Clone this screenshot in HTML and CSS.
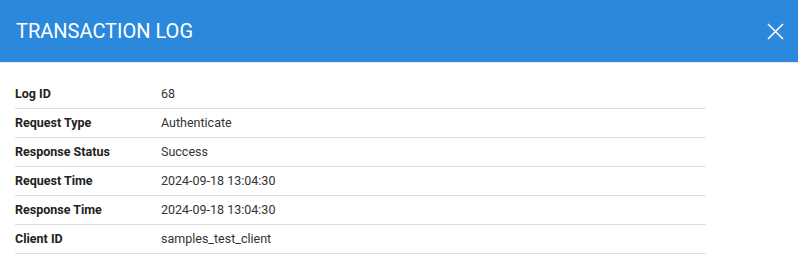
FILE: index.html
```html
<!DOCTYPE html>
<html>
<head>
<meta charset="utf-8">
<link rel="stylesheet" href="styles.css">
</head>
<body>
<div class="dialog">
  <header class="dialog-header">
    <h1 class="dialog-title">TRANSACTION LOG</h1>
    <button class="close-btn" aria-label="Close">
      <svg width="17" height="17" viewBox="0 0 17 17"><path d="M1 1 L16 16 M16 1 L1 16" stroke="#fff" stroke-width="1.6" fill="none"/></svg>
    </button>
  </header>
  <div class="dialog-body">
    <table class="log-table">
      <tr><th>Log ID</th><td>68</td></tr>
      <tr><th>Request Type</th><td>Authenticate</td></tr>
      <tr><th>Response Status</th><td>Success</td></tr>
      <tr><th>Request Time</th><td>2024-09-18 13:04:30</td></tr>
      <tr><th>Response Time</th><td>2024-09-18 13:04:30</td></tr>
      <tr><th>Client ID</th><td>samples_test_client</td></tr>
    </table>
  </div>
</div>
</body>
</html>
```
FILE: styles.css
```css
html, body {
  margin: 0;
  padding: 0;
  background: #fff;
  font-family: Roboto, "Liberation Sans", sans-serif;
}
.dialog {
  width: 798px;
}
.dialog-header {
  height: 62px;
  background: #2a88dd;
  border-bottom: 1px solid #e8e8e8;
  display: flex;
  align-items: center;
  justify-content: space-between;
  padding: 0 14px 0 16px;
  box-sizing: content-box;
}
.dialog-title {
  margin: 0;
  color: #fff;
  font-size: 20px;
  font-weight: 400;
  letter-spacing: 0;
}
.close-btn {
  background: none;
  border: 0;
  padding: 0;
  width: 17px;
  height: 17px;
  display: flex;
  cursor: pointer;
}
.dialog-body {
  padding: 17px 15px 16px;
}
.log-table {
  width: 691px;
  border-collapse: collapse;
  font-size: 12.5px;
}
.log-table th,
.log-table td {
  height: 26px;
  padding: 0 0 2px;
  border-bottom: 1px solid #dedede;
  text-align: left;
  vertical-align: middle;
}
.log-table th {
  width: 146px;
  font-weight: 700;
  color: #222;
}
.log-table td {
  color: #333;
}
```
